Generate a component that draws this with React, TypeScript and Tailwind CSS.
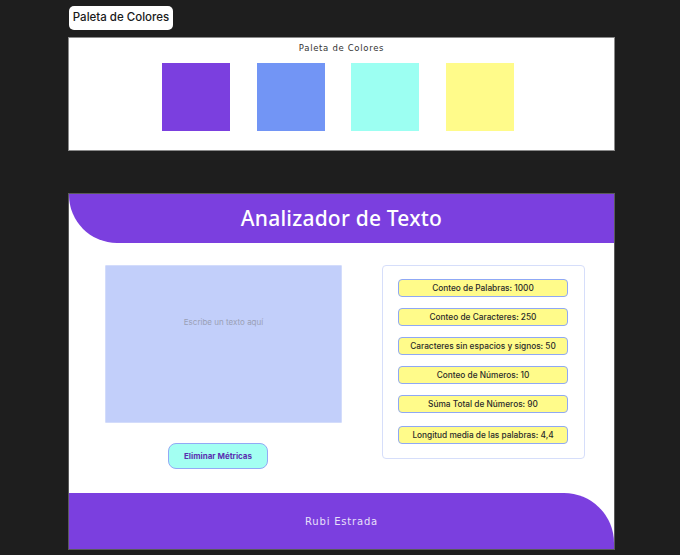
const swatches = ['#7b3fdf', '#7295f5', '#9cfff2', '#fffb8a'];

const metrics = [
  'Conteo de Palabras: 1000',
  'Conteo de Caracteres: 250',
  'Caracteres sin espacios y signos: 50',
  'Conteo de Números: 10',
  'Súma Total de Números: 90',
  'Longitud media de las palabras: 4,4',
];

export default function App() {
  return (
    <div className="w-[680px] min-h-[555px] bg-[#1e1e1e] pt-[6px] pl-[68px] font-['Inter',sans-serif]">
      {/* Frame label */}
      <div className="ml-[1px] w-[104px] h-[24px] bg-white rounded-[5px] flex items-center justify-center text-[11.5px] font-medium text-[#1a1a1a]">
        Paleta de Colores
      </div>

      {/* Palette frame */}
      <div className="mt-[7px] w-[547px] h-[114px] bg-white border border-[#8a8a8a]">
        <p className="pt-[5px] text-center text-[8.5px] leading-[10px] tracking-[0.08em] text-[#333] font-['DejaVu_Sans',sans-serif]">
          Paleta de Colores
        </p>
        <div className="flex gap-[27px] pl-[93px] mt-[10px]">
          {swatches.map((c, i) => (
            <div key={c} className={`w-[68px] h-[68px] ${i === 1 ? 'mr-[-1px]' : ''}`} style={{ backgroundColor: c }} />
          ))}
        </div>
      </div>

      {/* Analizador frame */}
      <div className="mt-[42px] w-[547px] h-[357px] bg-white border border-[#5a5a5a] flex flex-col">
        <div className="h-[49px] bg-[#7b3fdf] rounded-bl-[48px] flex items-center justify-center">
          <h1 className="text-white text-[21px] font-medium font-['Noto_Sans',sans-serif] tracking-[0.01em]">
            Analizador de Texto
          </h1>
        </div>

        <div className="flex flex-1 pl-[36px] pt-[22px]">
          <div className="flex flex-col">
            <div className="w-[237px] h-[158px] bg-[#c2cffa] border border-[#d3dcfb] rounded-[1px] pt-[50px] text-center text-[8px] text-[#9aa0b5]">
              Escribe un texto aquí
            </div>
            <button className="mt-[20px] ml-[63px] w-[100px] h-[26px] rounded-[8px] bg-[#a3fff2] border border-[#93a9f5] text-[8px] font-bold text-[#5b2fb0]">
              Eliminar Métricas
            </button>
          </div>

          <div className="ml-[40px] w-[203px] h-[194px] rounded-[4px] border border-[#d6defa] pl-[15px] pt-[13px] flex flex-col">
            {metrics.map((m, i) => (
              <div
                key={m}
                className={`w-[170px] h-[18px] rounded-[4px] bg-[#fffb8a] border border-[#8fa8f5] flex items-center justify-center text-[8.3px] font-medium text-[#2a2a2a] ${i === 0 ? '' : i === 5 ? 'mt-[13px]' : 'mt-[11px]'}`}
              >
                {m}
              </div>
            ))}
          </div>
        </div>

        <div className="h-[56px] bg-[#7b3fdf] rounded-tr-[50px] flex items-center justify-center">
          <span className="text-[#e8e0fa] text-[10px] tracking-[0.08em] font-['DejaVu_Sans',sans-serif]">
            Rubi Estrada
          </span>
        </div>
      </div>
    </div>
  );
}
